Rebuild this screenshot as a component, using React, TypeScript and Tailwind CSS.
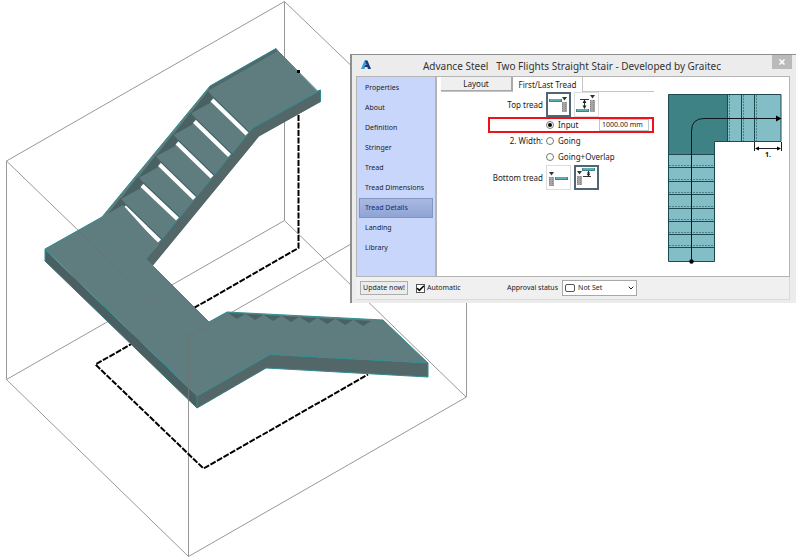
import { useState } from "react";
import type { ReactNode } from "react";
import { clsx } from "clsx";
import { FiCheck, FiChevronDown } from "react-icons/fi";

const pages = [
    "Properties",
    "About",
    "Definition",
    "Stringer",
    "Tread",
    "Tread Dimensions",
    "Tread Details",
    "Landing",
    "Library",
];

// open risers of the upper flight: x1, y1, x2, y2
const gaps = [
    [212, 100, 247, 134],
    [194.5, 121.5, 229.5, 155.5],
    [177, 143, 212, 177],
    [159.5, 164.5, 194.5, 198.5],
    [142, 185.5, 177.5, 219],
    [124.5, 207, 159.5, 241],
];

function StairModel() {
    return (
        <svg width="467" height="558" viewBox="0 0 467 558" fill="none" className="block shrink-0" aria-label="Stair model">
            {/* bounding box */}
            <g stroke="#989898">
                <path d="M6.5 161 284.5 1.5 466 176" />
                <path d="M284.5 1.5V220.5L6.5 379.5M284.5 220.5 466 397" />
                <path d="M6.5 161V379.5L188.5 556.5 466.5 397V170M188.5 337V556.5M188.5 337 466.5 178M6.5 161 188.5 337" />
            </g>
            <path d="M298.5 115V248L95.5 364.5 203.5 468.5 368 374.5" stroke="#000" strokeWidth="2" strokeDasharray="6 1.5" />

            {/* upper flight */}
            <path d="M102 217 210 86 276 48.5 278 51 317 91 320 90V102L259 136 153 265 146 259Z" fill="#5f7c7e" />
            <path d="M320 90.5 253 128 146 259 153 265.5 259 136.5 320.5 102Z" fill="#536769" />
            <path d="M210 86 276 48.5 277 51.5 208 91Z" fill="#4f6a6c" />
            <g fill="#4a6163">
                {gaps.map(([x, y]) => (
                    <path key={x} d={`M${x - 4} ${y - 9}L${x - 22} ${y + 14} ${x - 2} ${y + 3} ${x + 1} ${y - 3}Z`} />
                ))}
            </g>
            {gaps.map(([x1, y1, x2, y2]) => (
                <g key={x1}>
                    <path d={`M${x1 + 1} ${y1 - 3}L${x2 + 3} ${y2 - 1}`} stroke="#2f5c5f" />
                    <path d={`M${x1} ${y1}L${x2} ${y2}`} stroke="#fff" strokeWidth="4.2" />
                </g>
            ))}
            <g stroke="#2f8d91">
                <path d="M102 217 210 86 276 48.5 278 51 317.5 91" />
                <path d="M317.5 91 320.5 90V102" />
                <path d="M320 90.5 253 128" />
                <path d="M253 128 146 259" strokeDasharray="2 1" />
            </g>

            {/* landing and lower flight */}
            <path d="M45 249 102 217 123 205 159 245 146 259 209 322 227 312 383 320 428 363 270 354.5 197 396Z" fill="#5f7c7e" />
            <path d="M45 249.5 197 396V408L45 261Z" fill="#4a5f61" />
            <path d="M197 396 270 354.5 428 363V377L266 368 197 408Z" fill="#536769" />
            <g fill="#4a6163">
                {[0, 1, 2, 3, 4, 5, 6, 7].map((i) => (
                    <path key={i} d={`M${228 + i * 18} ${313 + i}L${245 + i * 18} ${314 + i} ${237 + i * 18} ${319 + i}Z`} />
                ))}
            </g>
            <g stroke="#2f8d91">
                <path d="M45 261V249L102 217M45 249 197 396V408" />
                <path d="M197 396 270 354.5 428 363V377L266 368M146 259 209 322 227 312 383 320 428 363" />
                <path d="M45 261 197 408 266 368" stroke="#3f7477" />
            </g>
            <path d="M78 231 188.5 337V400M188.5 337 228 314" stroke="#6b7475" />
            <path d="M297 70h3v3h-3z" fill="#000" />
        </svg>
    );
}

function TreadPlan() {
    const steps = [154.5, 167.5, 181.5, 194.5, 208.5, 221.5, 234.5, 247.5];
    return (
        <svg width="116" height="172" viewBox="667 93 116 172" fill="none" className="block" aria-label="Tread plan">
            <path d="M668.5 94.5H727.5V141.5H714.5V154.5H668.5Z" fill="#3f8285" />
            <path d="M727.5 94.5H781V141.5H727.5ZM668.5 154.5H714.5V261.5H668.5Z" fill="#83bec6" />
            <g stroke="#1d4a50">
                <path d="M668.5 94.5H781V141.5H714.5V261.5H668.5Z" />
                <path d="M727.5 94V141M741.5 94V141M754.5 94V141" />
                {steps.map((y) => (
                    <path key={y} d={`M668 ${y}H714`} />
                ))}
            </g>
            <g stroke="#4d828a" strokeDasharray="2 1">
                <path d="M729.5 95V141M743.5 95V141M756.5 95V141" />
                {steps.map((y) => (
                    <path key={y} d={`M669 ${y - 2}H714`} />
                ))}
            </g>
            <path d="M691.5 261V131Q691.5 118.5 704 118.5H777" stroke="#0c1a1c" />
            <path d="M776 115.5 781.5 118.5 776 121.5Z" fill="#000" />
            <circle cx="691.5" cy="261.5" r="2.2" fill="#000" />
            <path d="M754.5 142V151M781.5 142V151M757 148.5H779" stroke="#222" />
            <path d="M755 148.5 759 146.5V150.5ZM781 148.5 777 146.5V150.5Z" fill="#000" />
            <text x="768" y="157" fontSize="7" fontWeight="700" textAnchor="middle" fill="#111">
                1.
            </text>
        </svg>
    );
}

function Wall({ x, y, h }: { x: number; y: number; h: number }) {
    return (
        <g>
            <rect x={x} y={y} width="5" height={h} fill="#a6a6a6" />
            <path d={`M${x + 0.5} ${y}V${y + h}M${x + 3.5} ${y}V${y + h}`} stroke="#858585" strokeDasharray="1 1" />
            <path d={`M${x} ${y - 5}H${x + 5}L${x + 2.5} ${y - 1.5}Z`} fill="#333" />
        </g>
    );
}

function Plank({ x, y }: { x: number; y: number }) {
    return (
        <g>
            <rect x={x} y={y} width="13" height="3" fill="#3d8488" />
            <rect x={x + 1} y={y} width="11" height="2" fill="#5cadb0" />
        </g>
    );
}

function IconButton(props: { label: string; active?: boolean; onClick?: () => void; children: ReactNode }) {
    return (
        <button
            type="button"
            aria-label={props.label}
            onClick={props.onClick}
            className={clsx(
                "flex h-[25px] w-[25px] items-center justify-center bg-white",
                props.active ? "border-2 border-[#4e6676]" : "border border-[#dcdcdc]"
            )}
        >
            <svg width="21" height="21" viewBox="0 0 21 21" fill="none" className="shrink-0">
                {props.children}
            </svg>
        </button>
    );
}

function Radio(props: { id: string; checked: boolean; onChange: () => void; children: string }) {
    return (
        <div className="flex items-center gap-1">
            <input
                id={props.id}
                type="radio"
                name="width"
                checked={props.checked}
                onChange={props.onChange}
                className="flex h-2 w-2 shrink-0 appearance-none items-center justify-center rounded-full border border-[#777] bg-white checked:before:h-1 checked:before:w-1 checked:before:rounded-full checked:before:bg-black"
            />
            <label htmlFor={props.id}>{props.children}</label>
        </div>
    );
}

export default function App() {
    const [page, setPage] = useState("Tread Details");
    const [width, setWidth] = useState("input");
    const [top, setTop] = useState(0);
    const [bottom, setBottom] = useState(1);

    return (
        <main className="relative min-h-screen overflow-hidden bg-white font-['Noto_Sans',sans-serif] text-[8px] leading-4 text-[#1c1c1c]">
            <StairModel />

            {/* floating dialog window */}
            <section className="absolute top-[54px] right-1 left-[350px] border-t border-l-2 border-[#8e8e8e] bg-[#ececec] pr-1 pb-[3px] pl-1">
                <header className="flex h-[21px] items-start">
                    <svg width="12" height="12" viewBox="0 0 12 12" className="mt-1 ml-1">
                        <path d="M1 10 4.5 1.5H7L4.5 10Z" fill="#3a9ad9" />
                        <path d="M5 1.5H7.5L11 10H8L7.3 8H4.5L5.3 6H6.5Z" fill="#123f7c" />
                    </svg>
                    <h1 className="flex-1 text-center text-[10px] leading-[22px] font-normal whitespace-pre text-[#333]">
                        Advance Steel   Two Flights Straight Stair - Developed by Graitec
                    </h1>
                    <button type="button" aria-label="Close" className="flex h-[14px] w-5 items-center justify-center bg-[#bababa]">
                        <svg width="6" height="6" viewBox="0 0 6 6" stroke="#fff" strokeWidth="1.5">
                            <path d="M.5 .5 5.5 5.5M5.5 .5 .5 5.5" />
                        </svg>
                    </button>
                </header>

                <div className="mr-[2px] flex border border-[#b4b4b4] bg-white">
                    <nav className="w-20 shrink-0 border-r-2 border-[#b4b4b4] bg-[#c8d6fc] px-[2px] pt-[1px] pb-[18px] text-[7px]">
                        {pages.map((p) => (
                            <button
                                key={p}
                                type="button"
                                onClick={() => setPage(p)}
                                className={clsx(
                                    "block h-5 w-full border pl-[5px] text-left whitespace-nowrap",
                                    p === page
                                        ? "border-[#8296c6] bg-linear-to-b from-[#a9b9e2] to-[#8fa3d3] text-[#14297c]"
                                        : "border-transparent"
                                )}
                            >
                                {p}
                            </button>
                        ))}
                    </nav>

                    <div className="flex flex-1 items-start justify-between pr-[6px] pl-1">
                        <div className="w-[213px]">
                            <div className="flex border-b border-[#c4c4c4]">
                                <button type="button" className="h-[14px] w-[72px] border-r-2 border-b border-[#a8a8a8] bg-[#efefef] leading-3">
                                    Layout
                                </button>
                                <button type="button" className="-mb-px h-[15px] w-[70px] border-r border-[#c4c4c4] bg-white leading-3">
                                    First/Last Tread
                                </button>
                            </div>

                            <div className="flex items-center gap-[3px]">
                                <span className="w-[102px] text-right">Top tread</span>
                                <IconButton label="Tread level with floor" active={top === 0} onClick={() => setTop(0)}>
                                    <Plank x={1} y={5} />
                                    <Wall x={14} y={8} h={10} />
                                </IconButton>
                                <IconButton label="Tread below floor" active={top === 1} onClick={() => setTop(1)}>
                                    <Plank x={0} y={15} />
                                    <Wall x={14} y={6} h={12} />
                                    <path d="M4 5.5H13M8.5 6V14" stroke="#333" />
                                    <path d="M8.5 5.5 6.5 9H10.500ZM8.5 15 6.5 11.5H10.5Z" fill="#222" />
                                </IconButton>
                            </div>

                            <div className="ml-[47px] flex h-4 items-center border-2 border-[#f01018] pr-[3px] pl-14">
                                <Radio id="input" checked={width === "input"} onChange={() => setWidth("input")}>
                                    Input
                                </Radio>
                                <input
                                    aria-label="Input width"
                                    defaultValue="1000.00 mm"
                                    className="ml-auto h-3 w-[50px] border border-[#b9c7d3] bg-white px-[2px] text-[7px] leading-3 outline-none"
                                />
                            </div>
                            <div className="flex gap-[3px]">
                                <span className="w-[102px] text-right">2. Width:</span>
                                <div>
                                    <Radio id="going" checked={width === "going"} onChange={() => setWidth("going")}>
                                        Going
                                    </Radio>
                                    <Radio id="overlap" checked={width === "overlap"} onChange={() => setWidth("overlap")}>
                                        Going+Overlap
                                    </Radio>
                                </div>
                            </div>

                            <div className="flex items-center gap-[3px]">
                                <span className="w-[102px] text-right">Bottom tread</span>
                                <IconButton label="Tread level with base" active={bottom === 0} onClick={() => setBottom(0)}>
                                    <Wall x={1} y={10} h={9} />
                                    <Plank x={7} y={10} />
                                </IconButton>
                                <IconButton label="Tread above base" active={bottom === 1} onClick={() => setBottom(1)}>
                                    <Wall x={1} y={9} h={9} />
                                    <Plank x={6} y={1} />
                                    <path d="M7 9.5H15M12.5 4V9" stroke="#333" />
                                    <path d="M12.5 4 10.5 7H14.5ZM12.5 9.5 10.5 6.5H14.5Z" fill="#222" />
                                </IconButton>
                            </div>
                        </div>
                        <div className="pt-4">
                            <TreadPlan />
                        </div>
                    </div>
                </div>

                <footer className="mr-[2px] flex items-center border-r border-b border-[#dadada] bg-[#f0f0f0] py-[3px] pl-1 text-[7px]">
                    <button type="button" className="h-[14px] w-12 border border-[#adadad] bg-[#ececec] leading-3 whitespace-nowrap">
                        Update now!
                    </button>
                    <div className="relative ml-2 h-[9px] w-[9px]">
                        <input
                            id="auto"
                            type="checkbox"
                            defaultChecked
                            className="peer block h-[9px] w-[9px] appearance-none border border-[#555] bg-white"
                        />
                        <FiCheck className="pointer-events-none absolute inset-0 hidden h-[9px] w-[9px] stroke-4 text-black peer-checked:block" />
                    </div>
                    <label htmlFor="auto" className="ml-[2px] w-20">
                        Automatic
                    </label>
                    <label htmlFor="status">Approval status</label>
                    <div className="relative ml-1">
                        <select id="status" className="block h-4 w-[75px] appearance-none border border-[#a8a8a8] bg-white pl-[15px] leading-3 outline-none">
                            <option>Not Set</option>
                        </select>
                        <span className="pointer-events-none absolute top-1 left-[3px] h-2 w-[10px] rounded-xs border border-[#555]" />
                        <FiChevronDown className="pointer-events-none absolute top-1 right-[2px] h-2 w-2 stroke-3" />
                    </div>
                </footer>
            </section>
        </main>
    );
}
